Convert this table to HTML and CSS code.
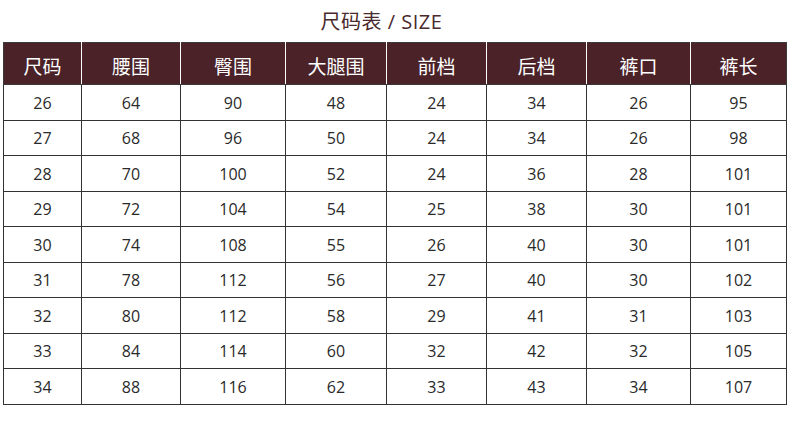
FILE: index.html
```html
<!DOCTYPE html>
<html lang="zh">
<head>
<meta charset="utf-8">
<link rel="stylesheet" href="styles.css">
</head>
<body>
<div class="page">
  <h1 class="title">尺码表 / SIZE</h1>
  <table class="size-table">
    <colgroup>
      <col class="c1"><col class="c2"><col class="c3"><col class="c4"><col class="c5"><col class="c6"><col class="c7"><col class="c8">
    </colgroup>
    <thead>
      <tr><th>尺码</th><th>腰围</th><th>臀围</th><th>大腿围</th><th>前档</th><th>后档</th><th>裤口</th><th>裤长</th></tr>
    </thead>
    <tbody>
      <tr><td>26</td><td>64</td><td>90</td><td>48</td><td>24</td><td>34</td><td>26</td><td>95</td></tr>
      <tr><td>27</td><td>68</td><td>96</td><td>50</td><td>24</td><td>34</td><td>26</td><td>98</td></tr>
      <tr><td>28</td><td>70</td><td>100</td><td>52</td><td>24</td><td>36</td><td>28</td><td>101</td></tr>
      <tr><td>29</td><td>72</td><td>104</td><td>54</td><td>25</td><td>38</td><td>30</td><td>101</td></tr>
      <tr><td>30</td><td>74</td><td>108</td><td>55</td><td>26</td><td>40</td><td>30</td><td>101</td></tr>
      <tr><td>31</td><td>78</td><td>112</td><td>56</td><td>27</td><td>40</td><td>30</td><td>102</td></tr>
      <tr><td>32</td><td>80</td><td>112</td><td>58</td><td>29</td><td>41</td><td>31</td><td>103</td></tr>
      <tr><td>33</td><td>84</td><td>114</td><td>60</td><td>32</td><td>42</td><td>32</td><td>105</td></tr>
      <tr><td>34</td><td>88</td><td>116</td><td>62</td><td>33</td><td>43</td><td>34</td><td>107</td></tr>
    </tbody>
  </table>
</div>
</body>
</html>
```
FILE: styles.css
```css
html, body {
  margin: 0;
  padding: 0;
  background: #ffffff;
}
.page {
  width: 790px;
  padding: 0 0 0 3px;
  box-sizing: border-box;
}
.title {
  margin: 0;
  height: 42px;
  line-height: 44px;
  text-align: center;
  font-family: "Open Sans", "Noto Sans CJK SC", sans-serif;
  font-weight: 400;
  font-size: 20px;
  color: #4a2a2c;
  letter-spacing: 0.5px;
  padding-right: 30px;
}
.size-table {
  width: 783px;
  border-collapse: collapse;
  table-layout: fixed;
  font-family: "Open Sans", "Noto Sans CJK SC", sans-serif;
}
.c1 { width: 78px; }
.c2 { width: 99px; }
.c3 { width: 105px; }
.c4 { width: 101px; }
.c5 { width: 100px; }
.c6 { width: 100px; }
.c7 { width: 104px; }
.c8 { width: 96px; }
.size-table th {
  background: #4a2228;
  color: #ffffff;
  font-weight: 400;
  font-size: 19px;
  height: 42px;
  padding: 3px 0 0;
  box-sizing: border-box;
  border-top: 1px solid #3a3a3a;
  border-left: 1px solid #ffffff;
  border-right: 1px solid #ffffff;
  border-bottom: 1px solid #3a3a3a;
  font-family: "Noto Sans CJK SC", sans-serif;
}
.size-table th:first-child { border-left: 1px solid #3a3a3a; }
.size-table th:last-child { border-right: 1px solid #3a3a3a; }
.size-table td {
  height: 35.5px;
  padding: 1px 0 0;
  box-sizing: border-box;
  text-align: center;
  font-size: 16px;
  color: #2a2a2a;
  border: 1px solid #333333;
}
```
